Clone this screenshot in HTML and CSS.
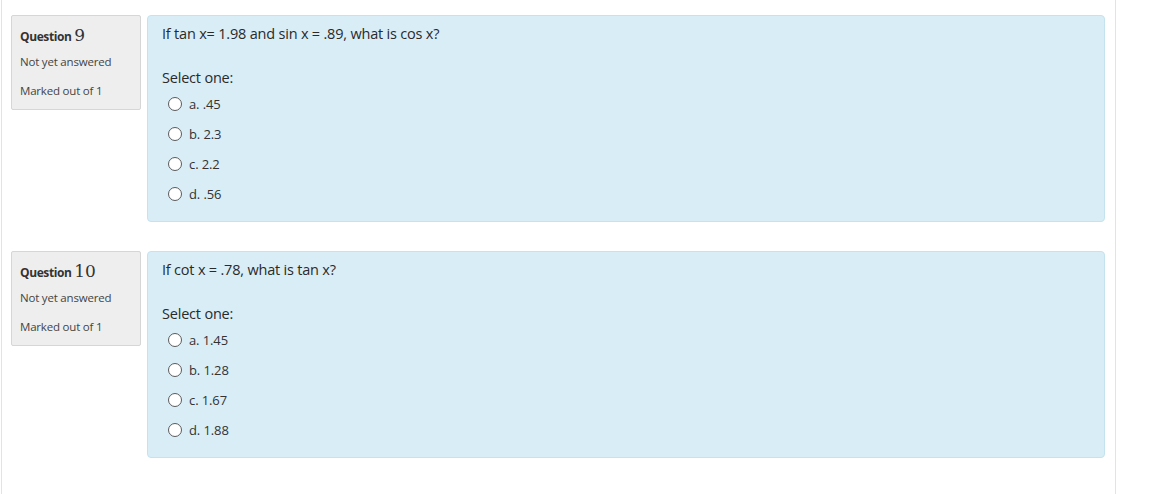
FILE: index.html
```html
<!DOCTYPE html>
<html>
<head>
<meta charset="utf-8">
<link rel="stylesheet" href="styles.css">
</head>
<body>
<div class="page">
  <div class="que">
    <div class="info">
      <h3 class="no">Question <span class="qno">9</span></h3>
      <div class="state">Not yet answered</div>
      <div class="grade">Marked out of 1</div>
    </div>
    <div class="content">
      <div class="qtext">If tan x= 1.98 and sin x = .89, what is cos x?</div>
      <div class="prompt">Select one:</div>
      <div class="answer">
        <label class="opt"><span class="radio"></span>a. .45</label>
        <label class="opt"><span class="radio"></span>b. 2.3</label>
        <label class="opt"><span class="radio"></span>c. 2.2</label>
        <label class="opt"><span class="radio"></span>d. .56</label>
      </div>
    </div>
  </div>
  <div class="que">
    <div class="info">
      <h3 class="no">Question <span class="qno">10</span></h3>
      <div class="state">Not yet answered</div>
      <div class="grade">Marked out of 1</div>
    </div>
    <div class="content">
      <div class="qtext">If cot x = .78, what is tan x?</div>
      <div class="prompt">Select one:</div>
      <div class="answer">
        <label class="opt"><span class="radio"></span>a. 1.45</label>
        <label class="opt"><span class="radio"></span>b. 1.28</label>
        <label class="opt"><span class="radio"></span>c. 1.67</label>
        <label class="opt"><span class="radio"></span>d. 1.88</label>
      </div>
    </div>
  </div>
</div>
</body>
</html>
```

FILE: styles.css
```css
html, body {
  margin: 0;
  padding: 0;
  background: #fff;
  font-family: "Open Sans", "Noto Sans", sans-serif;
  color: #333;
}
.page {
  margin-left: 1px;
  width: 1115px;
  height: 494px;
  box-sizing: border-box;
  border-left: 1px solid #e3e3e3;
  border-right: 1px solid #e3e3e3;
  padding: 15px 0 0 9px;
}
.que {
  display: flex;
  align-items: flex-start;
  gap: 6px;
  margin-bottom: 29px;
}
.info {
  width: 130px;
  height: 95px;
  box-sizing: border-box;
  background: #eeeeee;
  border: 1px solid #d6d6d6;
  border-radius: 2px;
  padding: 9px 8px 0 8px;
}
.no {
  margin: 0;
  font-size: 12px;
  font-weight: 700;
  line-height: 20px;
  letter-spacing: -0.4px;
  color: #333;
}
.qno {
  font-size: 17px;
  font-weight: 400;
  font-family: "DejaVu Serif", serif;
  letter-spacing: 0;
}
.state, .grade {
  font-size: 11.5px;
  letter-spacing: -0.2px;
  color: #444;
  line-height: 14px;
}
.state { margin-top: 8px; }
.grade { margin-top: 15px; }
.content {
  width: 958px;
  height: 207px;
  box-sizing: border-box;
  background: #d9edf7;
  border: 1px solid #c4e3ef;
  border-radius: 4px;
  padding: 9px 14px 0 14px;
}
.qtext {
  font-size: 14.5px;
  line-height: 18px;
  color: #2a2a2a;
  letter-spacing: -0.2px;
}
.prompt {
  margin-top: 26px;
  font-size: 14.5px;
  line-height: 18px;
  color: #2a2a2a;
  letter-spacing: -0.2px;
}
.answer {
  display: flex;
  flex-direction: column;
  margin-top: 2px;
}
.opt {
  display: flex;
  align-items: center;
  height: 30px;
  font-size: 13px;
  color: #333;
  letter-spacing: -0.1px;
  padding-left: 6px;
}
.radio {
  width: 12px;
  height: 12px;
  border: 1px solid #5a5a5a;
  border-radius: 50%;
  background: #fff;
  margin-right: 7px;
}
```
